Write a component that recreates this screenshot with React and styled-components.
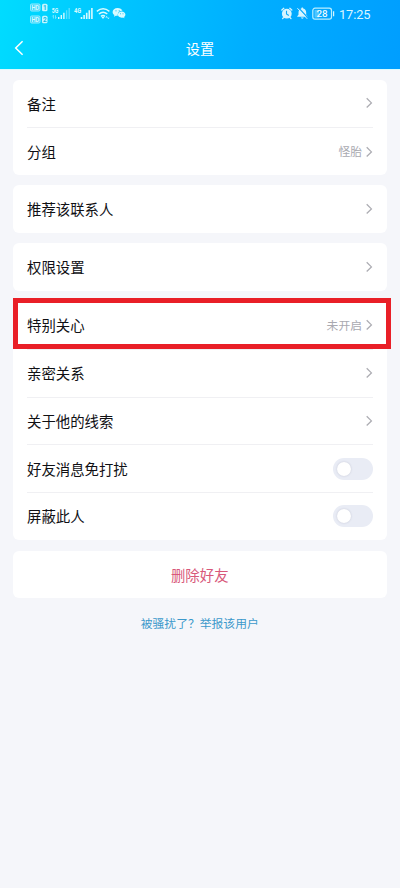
import React from "react";
import styled, { createGlobalStyle } from "styled-components";

const GlobalStyle = createGlobalStyle`
  * {
    box-sizing: border-box;
  }
  body {
    margin: 0;
    background: #f5f6fa;
    font-family: "Noto Sans CJK SC", "Noto Sans", sans-serif;
  }
`;

const Page = styled.div`
  width: 400px;
  height: 888px;
  overflow: hidden;
  background: #f5f6fa;
`;

const Header = styled.header`
  height: 70px;
  background: linear-gradient(100deg, #00dcff 0%, #00c4ff 30%, #00aeff 62%, #009eff 100%);
  border-bottom: 1px solid #d9fbff;
  color: #fff;
`;

const StatusBar = styled.div`
  display: flex;
  justify-content: space-between;
  height: 28px;
  padding: 0 29px 0 28px;
`;

const StatusGroup = styled.div`
  display: flex;
  align-items: center;
`;

const StatusIcon = styled.svg`
  display: block;
  height: 28px;
  font-family: "Roboto", sans-serif;
  font-weight: 700;
`;

const Clock = styled.span`
  width: 32px;
  font-family: "Roboto", sans-serif;
  font-size: 12.8px;
  line-height: 29px;
  letter-spacing: -0.1px;
  color: #dcf6ff;
  white-space: nowrap;
`;

const NavBar = styled.div`
  display: grid;
  grid-template-columns: 40px 1fr 40px;
  align-items: center;
  height: 39px;
`;

const BackButton = styled.button`
  display: flex;
  padding: 0 0 0 14px;
  border: none;
  background: none;
  color: inherit;
`;

const Title = styled.h1`
  margin: 0;
  font-size: 14.2px;
  font-weight: 400;
  line-height: 20px;
  text-align: center;
`;

const Content = styled.main`
  display: flex;
  flex-direction: column;
  gap: 10.4px;
  padding: 9.6px 13.5px 0 13px;
`;

const Card = styled.section`
  position: relative;
  padding: 0 14px;
  border-radius: 6px;
  background: #fff;
`;

const Row = styled.div`
  display: flex;
  align-items: center;
  justify-content: space-between;
  height: 47.67px;
  color: #101014;
  font-size: 14.4px;
  line-height: 20px;
  & + & {
    border-top: 1px solid #f0f0f3;
  }
`;

const Label = styled.span`
  padding-top: 0.2px;
`;

const RowEnd = styled.div`
  display: flex;
  align-items: center;
  gap: 2.5px;
`;

const Value = styled.span`
  padding-bottom: 0.4px;
  color: #a9a9b0;
  font-size: 11.8px;
`;

const Switch = styled.div`
  display: flex;
  align-items: center;
  width: 40px;
  height: 22px;
  padding: 0 4px;
  border-radius: 11px;
  background: #e9ecf5;
`;

const Knob = styled.div`
  width: 14px;
  height: 14px;
  border-radius: 50%;
  background: #fff;
  box-shadow: 0 0 2px rgba(80, 80, 110, 0.25);
`;

const Highlight = styled.div`
  position: absolute;
  top: -3.47px;
  left: 0;
  right: -4.5px;
  height: 51px;
  border: 5px solid #e91f27;
`;

const DeleteButton = styled.button`
  height: 47.3px;
  margin-top: 0.7px;
  padding: 0;
  border: none;
  border-radius: 6px;
  background: #fff;
  color: #d8587a;
  font-family: inherit;
  font-size: 14.4px;
`;

const ReportLink = styled.a`
  margin-top: 5px;
  color: #3c99cb;
  font-size: 11.8px;
  line-height: 20px;
  text-align: center;
`;

const Arrow = () => (
  <svg width="8" height="12" viewBox="0 0 8 12" fill="none">
    <path d="M1.7 1.3 6.4 5.9 1.7 10.5" stroke="#adadb3" strokeWidth="1.3" />
  </svg>
);

const SignalIcons = () => (
  <StatusIcon width="98" viewBox="28 0 98 28" fill="#d8faff">
    {[4, 16].map((y, i) => (
      <g key={y}>
        <rect x="30.5" y={y} width="9.5" height="7" rx="1.2" fill="#35d3fb" stroke="#a5f1ff" strokeWidth=".9" />
        <text x="31.4" y={y + 5.8} fontSize="6.6" textLength="7.8" lengthAdjust="spacingAndGlyphs">
          HD
        </text>
        <rect x="42" y={y - 0.3} width="5.5" height="7.6" rx="1.5" fill="#c3f6ff" />
        <text x="43" y={y + 5.8} fontSize="6.4" fill="#08b9e5">
          {i + 1}
        </text>
      </g>
    ))}
    <text x="51.7" y="12.6" fontSize="6.5" textLength="6.5" lengthAdjust="spacingAndGlyphs">
      5G
    </text>
    <path d="M53.4 15.3v3.2M52.4 16.4l1-1.1M55.5 15.3v3.2l1-1" stroke="#a5f1ff" strokeWidth=".7" fill="none" />
    <path d="M58 17h1.4v2H58zM60.6 15H62v4h-1.4zM63.2 12.8h1.4V19h-1.4z" />
    <path d="M65.9 10.3h1.4V19h-1.4zM68.5 8h1.4v11h-1.4z" opacity=".4" />
    <text x="74" y="12.6" fontSize="6.5" textLength="7.2" lengthAdjust="spacingAndGlyphs">
      4G
    </text>
    <path d="M80.7 17h1.6v2h-1.6zM83.3 15h1.6v4h-1.6zM85.9 12.8h1.6V19h-1.6zM88.5 10.3h1.6V19h-1.6zM91.1 8h1.6v11h-1.6z" />
    <g fill="none" stroke="#d8faff" strokeWidth="1.4">
      <path d="M96.8 11.4q6.3-5.2 12.6 0M98.9 14q4.2-3.6 8.4 0" />
      <path d="M101 16.4q2-1.7 4 0" />
    </g>
    <path d="m103 18.9-1.7-2.1h3.4zM106.6 16.1l1.2 1.4h-2.4zM108.4 19.1l-1.2-1.3h2.4z" />
    <path d="M117.6 8c-3 0-5 1.8-5 4 0 1.3.7 2.4 1.8 3.1l-.4 1.6 1.8-1c.7.2 1.3.2 2 .1-.5-3.1 1.9-5.1 4.7-5-.6-1.7-2.5-2.8-4.9-2.8z" />
    <path d="M121.7 11.5c-2.2 0-3.8 1.4-3.8 3.1 0 1.8 1.6 3.1 3.8 3.1.5 0 .9 0 1.3-.2l1.5.8-.4-1.3c.8-.6 1.3-1.4 1.3-2.4 0-1.7-1.5-3.1-3.7-3.1z" />
    <g fill="#12b8ed">
      <circle cx="116" cy="10.8" r=".6" />
      <circle cx="119.2" cy="10.8" r=".6" />
      <circle cx="120.5" cy="13.8" r=".5" />
      <circle cx="123" cy="13.8" r=".5" />
    </g>
  </StatusIcon>
);

const DeviceIcons = () => (
  <StatusIcon width="59" viewBox="280 0 59 28" fill="#d6f5ff">
    <circle cx="286.8" cy="13.7" r="4.9" />
    <path
      d="M281.8 10l2-1.7M291.8 10l-2-1.7M283.4 17.8l-.8.8M290.2 17.8l.8.8"
      stroke="#d6f5ff"
      strokeWidth="1.3"
      strokeLinecap="round"
    />
    <path d="M286.5 10.8v3.2l2.3 1.5" fill="none" stroke="#0ea9f5" strokeWidth="1.1" />
    <path d="M302.3 7.5c.7 0 .9.4.9 1 2 .5 3 2 3 4.2v2.1l1.3 1.4v.6h-10.3v-.6l1.3-1.4v-2.1c0-2.2 1-3.7 2.9-4.2 0-.6.2-1 .9-1zM300.9 17.5h2.8c-.2 1.5-2.6 1.5-2.8 0z" />
    <path d="M298.5 7.7 308 18" stroke="#09aaff" strokeWidth="1.2" />
    <path d="M297.4 8.2 307.2 18.8" stroke="#d6f5ff" strokeWidth="1" />
    <rect x="312.8" y="8.2" width="18.7" height="11" rx="2.2" fill="none" stroke="#b9eeff" strokeWidth="1.2" />
    <rect x="314.5" y="9.9" width="4.5" height="7.7" fill="#82d9ff" opacity=".6" />
    <text x="316.4" y="17.1" fontSize="9.4" fontWeight="500" textLength="11.2" lengthAdjust="spacingAndGlyphs" fill="#f0fcff">
      28
    </text>
    <path d="M333 11.2h1.2v5H333z" />
  </StatusIcon>
);

const rows = [
  [{ label: "备注" }, { label: "分组", value: "怪胎" }],
  [{ label: "推荐该联系人" }],
  [{ label: "权限设置" }],
  [
    { label: "特别关心", value: "未开启", highlight: true },
    { label: "亲密关系" },
    { label: "关于他的线索" },
    { label: "好友消息免打扰", toggle: true },
    { label: "屏蔽此人", toggle: true },
  ],
];

const SettingRow = ({ label, value, toggle }) => (
  <Row>
    <Label>{label}</Label>
    {toggle ? (
      <Switch>
        <Knob />
      </Switch>
    ) : (
      <RowEnd>
        {value && <Value>{value}</Value>}
        <Arrow />
      </RowEnd>
    )}
  </Row>
);

const App = () => {
  return (
    <Page>
      <GlobalStyle />
      <Header>
        <StatusBar>
          <StatusGroup>
            <SignalIcons />
          </StatusGroup>
          <StatusGroup>
            <DeviceIcons />
            <Clock>17:25</Clock>
          </StatusGroup>
        </StatusBar>
        <NavBar>
          <BackButton>
            <svg width="10" height="16" viewBox="0 0 10 16" fill="none">
              <path d="M8.6 1.2 1.7 8l6.9 6.8" stroke="#fff" strokeWidth="1.5" />
            </svg>
          </BackButton>
          <Title>设置</Title>
        </NavBar>
      </Header>
      <Content>
        {rows.map((group) => (
          <Card key={group[0].label}>
            {group.map((row) => (
              <SettingRow key={row.label} {...row} />
            ))}
            {group[0].highlight && <Highlight />}
          </Card>
        ))}
        <DeleteButton>删除好友</DeleteButton>
        <ReportLink>被骚扰了？举报该用户</ReportLink>
      </Content>
    </Page>
  );
};

export default App;
